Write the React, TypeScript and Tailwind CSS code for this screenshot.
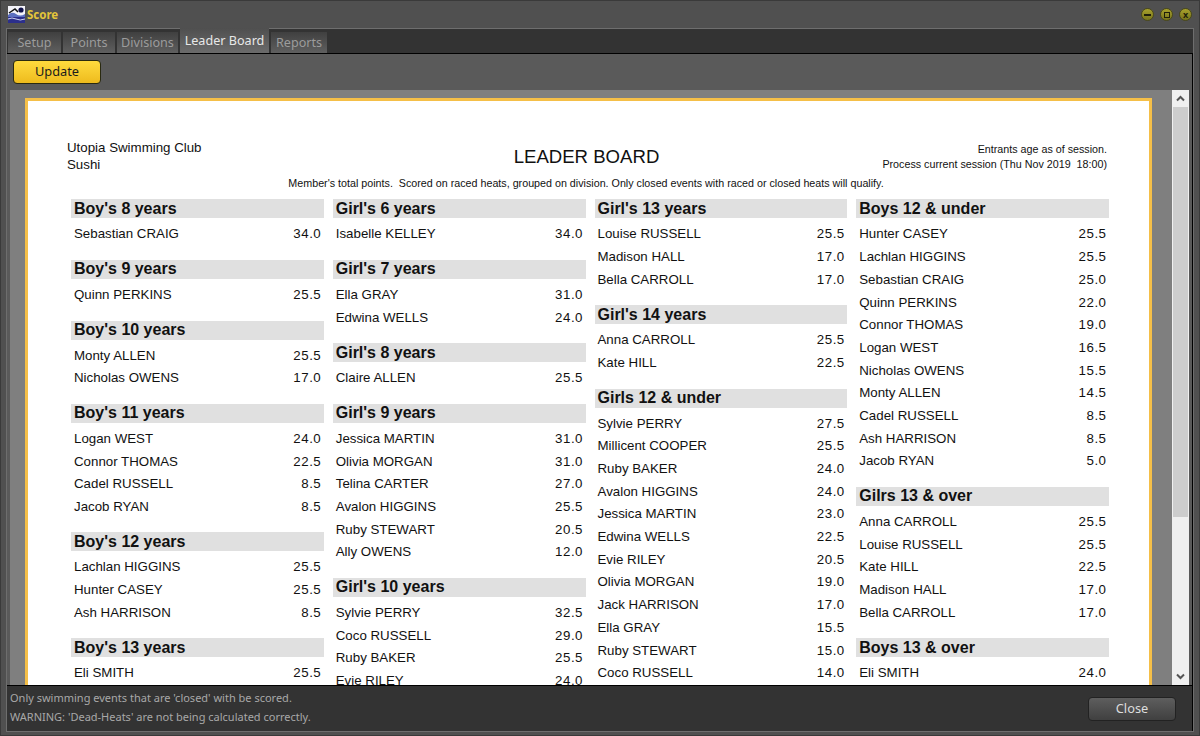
import React from "react";

type Row = [string, string];
type Section = { title: string; rows: Row[] };

const COLUMNS: Section[][] = [
  [
    { title: "Boy's 8 years", rows: [["Sebastian CRAIG", "34.0"]] },
    { title: "Boy's 9 years", rows: [["Quinn PERKINS", "25.5"]] },
    { title: "Boy's 10 years", rows: [["Monty ALLEN", "25.5"], ["Nicholas OWENS", "17.0"]] },
    {
      title: "Boy's 11 years",
      rows: [["Logan WEST", "24.0"], ["Connor THOMAS", "22.5"], ["Cadel RUSSELL", "8.5"], ["Jacob RYAN", "8.5"]],
    },
    { title: "Boy's 12 years", rows: [["Lachlan HIGGINS", "25.5"], ["Hunter CASEY", "25.5"], ["Ash HARRISON", "8.5"]] },
    { title: "Boy's 13 years", rows: [["Eli SMITH", "25.5"]] },
  ],
  [
    { title: "Girl's 6 years", rows: [["Isabelle KELLEY", "34.0"]] },
    { title: "Girl's 7 years", rows: [["Ella GRAY", "31.0"], ["Edwina WELLS", "24.0"]] },
    { title: "Girl's 8 years", rows: [["Claire ALLEN", "25.5"]] },
    {
      title: "Girl's 9 years",
      rows: [
        ["Jessica MARTIN", "31.0"],
        ["Olivia MORGAN", "31.0"],
        ["Telina CARTER", "27.0"],
        ["Avalon HIGGINS", "25.5"],
        ["Ruby STEWART", "20.5"],
        ["Ally OWENS", "12.0"],
      ],
    },
    {
      title: "Girl's 10 years",
      rows: [["Sylvie PERRY", "32.5"], ["Coco RUSSELL", "29.0"], ["Ruby BAKER", "25.5"], ["Evie RILEY", "24.0"]],
    },
  ],
  [
    { title: "Girl's 13 years", rows: [["Louise RUSSELL", "25.5"], ["Madison HALL", "17.0"], ["Bella CARROLL", "17.0"]] },
    { title: "Girl's 14 years", rows: [["Anna CARROLL", "25.5"], ["Kate HILL", "22.5"]] },
    {
      title: "Girls 12 & under",
      rows: [
        ["Sylvie PERRY", "27.5"],
        ["Millicent COOPER", "25.5"],
        ["Ruby BAKER", "24.0"],
        ["Avalon HIGGINS", "24.0"],
        ["Jessica MARTIN", "23.0"],
        ["Edwina WELLS", "22.5"],
        ["Evie RILEY", "20.5"],
        ["Olivia MORGAN", "19.0"],
        ["Jack HARRISON", "17.0"],
        ["Ella GRAY", "15.5"],
        ["Ruby STEWART", "15.0"],
        ["Coco RUSSELL", "14.0"],
      ],
    },
  ],
  [
    {
      title: "Boys 12 & under",
      rows: [
        ["Hunter CASEY", "25.5"],
        ["Lachlan HIGGINS", "25.5"],
        ["Sebastian CRAIG", "25.0"],
        ["Quinn PERKINS", "22.0"],
        ["Connor THOMAS", "19.0"],
        ["Logan WEST", "16.5"],
        ["Nicholas OWENS", "15.5"],
        ["Monty ALLEN", "14.5"],
        ["Cadel RUSSELL", "8.5"],
        ["Ash HARRISON", "8.5"],
        ["Jacob RYAN", "5.0"],
      ],
    },
    {
      title: "Gilrs 13 & over",
      rows: [
        ["Anna CARROLL", "25.5"],
        ["Louise RUSSELL", "25.5"],
        ["Kate HILL", "22.5"],
        ["Madison HALL", "17.0"],
        ["Bella CARROLL", "17.0"],
      ],
    },
    { title: "Boys 13 & over", rows: [["Eli SMITH", "24.0"]] },
  ],
];

const TABS = ["Setup", "Points", "Divisions", "Leader Board", "Reports"];

const TAB_WIDTHS: Record<string, string> = {
  Setup: "w-[53px]",
  Points: "w-[52px]",
  Divisions: "w-[61px]",
  "Leader Board": "w-[89px]",
  Reports: "w-[56px]",
};

const WindowButton = ({ children }: { children: React.ReactNode }) => (
  <div className="flex h-[13px] w-[13px] items-center justify-center rounded-full border border-[#4a4918] bg-gradient-to-b from-[#a8a22c] to-[#77741c]">
    {children}
  </div>
);

const Logo = () => (
  <svg width="17" height="17" viewBox="0 0 17 17">
    <rect width="17" height="17" fill="#f4f4fa" />
    <rect y="11" width="17" height="6" fill="#2c2f8c" />
    <path d="M0 9 Q4 5 8 8 T17 8 V11 H0 Z" fill="#5b6fc0" />
    <path d="M1 7 L7 3 L10 6" stroke="#111" strokeWidth="1.5" fill="none" />
    <circle cx="13" cy="4" r="2.6" fill="#10124a" />
    <path d="M0 13 Q4 11 8 13 T17 13" stroke="#cfd4f0" fill="none" />
  </svg>
);

const Division = ({ section }: { section: Section }) => (
  <div className="mb-[14.2px]">
    <div className="mb-[4.7px] flex h-[19px] items-center bg-[#e0e0e0] pl-[3px] text-[16px] font-bold leading-none text-[#111]">
      {section.title}
    </div>
    {section.rows.map(([name, score], i) => (
      <div key={i} className="flex h-[22.7px] items-center justify-between pl-[3px] pr-[2.5px] text-[13.3px] text-[#111]">
        <span>{name}</span>
        <span className="tracking-[0.5px]">{score}</span>
      </div>
    ))}
  </div>
);

export default function App() {
  return (
    <div className="flex h-[736px] w-[1200px] flex-col overflow-hidden border border-[#3a3a3a] bg-[#505050] font-['Noto_Sans',sans-serif]">
      {/* Title bar */}
      <div className="flex h-[27px] shrink-0 items-center justify-between pl-[7px] pr-[7px]">
        <div className="flex items-center gap-[2px]">
          <Logo />
          <span className="text-[11.5px] font-bold text-[#e4c53a]">Score</span>
        </div>
        <div className="flex items-center gap-[6px]">
          <WindowButton>
            <div className="h-[2px] w-[7px] bg-[#1f1f0a]" />
          </WindowButton>
          <WindowButton>
            <div className="h-[6px] w-[6px] border border-[#1f1f0a]" />
          </WindowButton>
          <WindowButton>
            <span className="text-[9px] font-bold leading-none text-[#1f1f0a]">x</span>
          </WindowButton>
        </div>
      </div>

      {/* Tab area */}
      <div className="mx-[5px] mb-[3px] flex min-h-0 flex-1 flex-col border border-[#6e6e6e]">
        <div className="flex h-[25px] shrink-0 items-end gap-[2px] border-b border-black bg-[#333333] pl-[1px]">
          {TABS.map((tab) => (
            <div
              key={tab}
              className={
                tab === "Leader Board"
                  ? `${TAB_WIDTHS[tab]} flex h-[25px] items-center justify-center bg-gradient-to-b from-[#4f4f4f] to-[#6b6b6b] pt-[2px] text-[12.6px] text-[#e8e8e8]`
                  : `${TAB_WIDTHS[tab]} flex h-[21px] items-center justify-center bg-gradient-to-b from-[#404040] to-[#5f5f5f] pt-[1px] text-[12.6px] text-[#9c9c9c]`
              }
            >
              {tab}
            </div>
          ))}
        </div>

        <div className="flex min-h-0 flex-1 flex-col border-r border-black bg-[#5a5a5a]">
          <div className="flex h-[36px] shrink-0 items-center pl-[6px]">
            <div className="flex h-[24px] w-[88px] items-center justify-center rounded-[4px] border border-[#2a2a10] bg-gradient-to-b from-[#ffdb3d] to-[#eebb1c] text-[12.8px] text-[#1b1b1b]">
              Update
            </div>
          </div>

          {/* Report viewer */}
          <div className="flex min-h-0 flex-1 pl-[3px] pr-[3px]">
            <div className="min-w-0 flex-1 overflow-hidden bg-[#7f7f7f] pl-[15px] pr-[20px] pt-[8px]">
              <div className="h-[700px] border-[3px] border-[#f5bf48] bg-white pl-[39px] pr-[40px] font-['Liberation_Sans',sans-serif]">
                <div className="flex h-[75px] items-start pt-[38px] text-[#111]">
                  <div className="w-[240px] text-[13.3px] leading-[17px]">
                    <div>Utopia Swimming Club</div>
                    <div>Sushi</div>
                  </div>
                  <div className="flex-1 pr-[3px] pt-[7px] text-center text-[18.6px] leading-[22px]">LEADER BOARD</div>
                  <div className="w-[240px] pr-[2px] pt-[3px] text-right text-[10.72px] leading-[15px]">
                    <div>Entrants age as of session.</div>
                    <div>Process current session (Thu Nov 2019&nbsp; 18:00)</div>
                  </div>
                </div>
                <div className="h-[23px] pr-[4px] text-center text-[10.72px] leading-[14px] text-[#111]">
                  Member's total points.&nbsp; Scored on raced heats, grouped on division. Only closed events with raced or closed heats will qualify.
                </div>
                <div className="grid grid-cols-4 gap-x-[9px] pl-[4px] pt-[0.4px]">
                  {COLUMNS.map((col, i) => (
                    <div key={i}>
                      {col.map((s) => (
                        <Division key={s.title} section={s} />
                      ))}
                    </div>
                  ))}
                </div>
              </div>
            </div>

            {/* Scrollbar */}
            <div className="flex w-[17px] shrink-0 flex-col bg-[#f0f0f0]">
              <div className="flex h-[17px] items-center justify-center">
                <svg width="9" height="7" viewBox="0 0 9 7">
                  <path d="M1 5.5 L4.5 2 L8 5.5" stroke="#555" strokeWidth="2" fill="none" />
                </svg>
              </div>
              <div className="mx-px h-[410px] bg-[#cdcdcd]" />
              <div className="flex-1" />
              <div className="flex h-[17px] items-center justify-center">
                <svg width="9" height="7" viewBox="0 0 9 7">
                  <path d="M1 1.5 L4.5 5 L8 1.5" stroke="#555" strokeWidth="2" fill="none" />
                </svg>
              </div>
            </div>
          </div>

          {/* Footer */}
          <div className="flex h-[46px] shrink-0 items-center justify-between border-t border-black bg-[#333333] pl-[3px] pr-[16px]">
            <div className="pb-[3px] text-[11px] leading-[19px] text-[#a8a8a8]">
              <div>Only swimming events that are 'closed' with be scored.</div>
              <div>WARNING: 'Dead-Heats' are not being calculated correctly.</div>
            </div>
            <div className="flex h-[24px] w-[88px] items-center justify-center rounded-[4px] border border-[#222] bg-gradient-to-b from-[#5e5e5e] to-[#404040] text-[12.8px] text-[#dddddd]">
              Close
            </div>
          </div>
        </div>
      </div>
    </div>
  );
}
